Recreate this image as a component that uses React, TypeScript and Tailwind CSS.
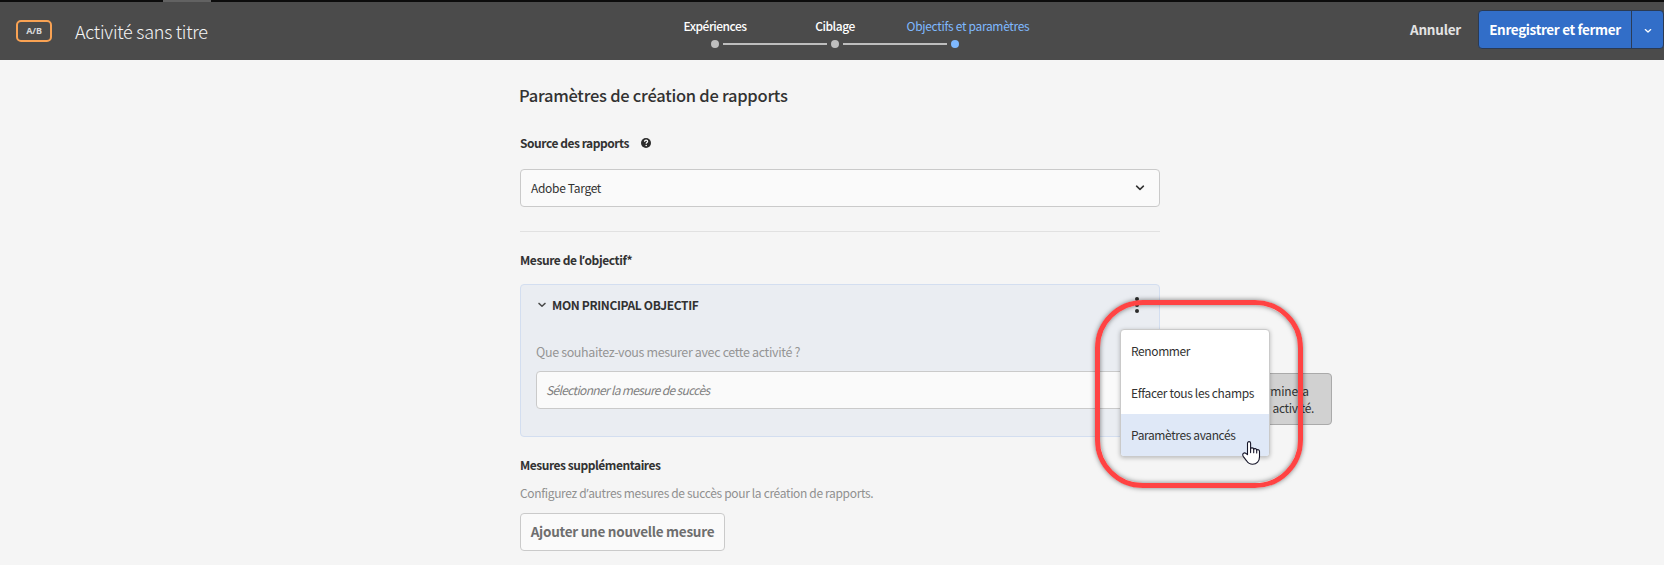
import type { ReactNode } from "react";

function Chevron({ className = "" }: { className?: string }) {
  return (
    <svg viewBox="0 0 10 6" className={`h-[6px] w-[10px] ${className}`} fill="none" stroke="currentColor" strokeWidth="1.6" strokeLinecap="round" strokeLinejoin="round">
      <path d="M1.6 1.2 5 4.3 8.4 1.2" />
    </svg>
  );
}

function Apostrophe() {
  return <span className="font-['Noto_Sans',sans-serif]">’</span>;
}

function Step({ label, active = false, className }: { label: string; active?: boolean; className: string }) {
  return (
    <div className="relative flex w-[120px] flex-col items-center">
      <span className={`text-[12px] leading-[18px] whitespace-nowrap ${className}`}>{label}</span>
      <span className={`mt-[5px] size-2 rounded-full ${active ? "bg-[#7fb9ff]" : "bg-[#bebebe]"}`} />
      {!active && <span className="absolute top-[26px] left-[68px] h-[2px] w-[104px] bg-[#bebebe]" />}
    </div>
  );
}

function Header() {
  return (
    <header className="flex h-[60px] flex-col bg-[#4b4b4b]">
      <div className="flex h-[2px] bg-[#0c0c0c] pl-[163px]">
        <div className="w-[48px] bg-[#626262]" />
      </div>
      <div className="flex h-[58px] items-start">
        <div className="mt-[18px] ml-4 flex h-[22px] w-9 items-center justify-center rounded-[5px] border-2 border-[#f9a253] font-['Noto_Sans',sans-serif] text-[9px] font-bold tracking-[-0.1px] text-[#d8d8d8]">
          A/B
        </div>
        <h1 className="mt-[17px] ml-[23px] w-[539px] text-[18px] leading-6 font-light tracking-[-0.25px] text-[#f5f5f5]">Activité sans titre</h1>
        <nav className="mt-[15px] ml-[41px] flex text-white">
          <Step label="Expériences" className="font-medium tracking-[-0.5px]" />
          <Step label="Ciblage" className="font-medium tracking-[-0.47px]" />
          <Step label="Objectifs et paramètres" active className="ml-[26px] tracking-[-0.31px] text-[#7fb9ff]" />
        </nav>
        <div className="mt-2 ml-auto flex items-center">
          <button className="mr-[17px] text-[13.5px] font-bold tracking-[-0.22px] text-[#e3e3e3]">Annuler</button>
          <div className="flex h-[39px] rounded-[4px] border border-[#2b3a52] bg-[#326ec8] text-white">
            <button className="w-[153px] border-r border-[#2a3c58] text-[13.5px] font-bold tracking-[-0.34px] whitespace-nowrap">Enregistrer et fermer</button>
            <button className="flex w-[31px] items-center justify-center">
              <Chevron className="mt-[2px] scale-[0.8]" />
            </button>
          </div>
        </div>
      </div>
    </header>
  );
}

function Label({ children, className }: { children: ReactNode; className: string }) {
  return <div className={`text-[12px] leading-5 font-bold whitespace-nowrap text-[#323232] ${className}`}>{children}</div>;
}

function OptionsMenu() {
  return (
    <div className="absolute top-[329px] left-[1120px] flex h-[128px] w-[150px] flex-col overflow-hidden rounded-[4px] border border-[#cacaca] bg-white text-[12px] whitespace-nowrap text-[#323232] shadow-[0_1px_4px_rgba(0,0,0,0.25)]">
      <div className="flex h-[42px] items-center pl-[10px] tracking-[-0.4px]">Renommer</div>
      <div className="flex h-[42px] items-center pl-[10px] tracking-[-0.35px]">Effacer tous les champs</div>
      <div className="flex h-[42px] items-center bg-[#dfe8f7] pl-[10px] tracking-[-0.38px]">Paramètres avancés</div>
    </div>
  );
}

function HandCursor() {
  return (
    <svg viewBox="0 0 19 24" className="absolute top-[441px] left-[1242px] h-6 w-[19px]" fill="#fff" stroke="#16162a" strokeWidth="1.1" strokeLinejoin="round" strokeLinecap="round">
      <path d="M5.5 13.6V2.3C5.5 1.2 6.2.6 7 .6s1.6.6 1.6 1.7v5.3c.4-1.1 3-1 3.1.5.6-.9 2.9-.6 3 .9.8-.7 2.8-.3 2.8 1.5v5.2c0 4.3-2.7 7.6-6.9 7.6-3 0-4.6-1.3-6-3.5L1.2 15.3c-1.4-2.3 1-4.2 2.5-3.1z" />
      <path d="M8.6 7.6v4M11.7 8.1v3.7M14.7 9v3" fill="none" />
    </svg>
  );
}

export default function App() {
  return (
    <div className="relative h-[565px] w-[1664px] overflow-hidden bg-[#f5f5f5] font-['Noto_Sans_CJK_SC',sans-serif]">
      <Header />
      <main className="ml-[520px] flex w-[640px] flex-col">
        <h2 className="mt-[23px] -ml-px text-[16.5px] leading-6 font-medium tracking-[-0.26px] text-[#323232]">Paramètres de création de rapports</h2>
        <div className="mt-[26px] flex items-center gap-[12px]">
          <Label className="tracking-[-0.46px]">Source des rapports</Label>
          <svg viewBox="0 0 10 10" className="size-[10px] text-[#2c2c2c]">
            <circle cx="5" cy="5" r="5" fill="currentColor" />
            <path d="M3.5 3.7C3.6 2.7 4.3 2.2 5.1 2.2c.9 0 1.5.5 1.5 1.3 0 1.1-1.4 1.1-1.4 2.2" fill="none" stroke="#fff" strokeWidth="1.3" />
            <circle cx="5.2" cy="7.5" r=".8" fill="#fff" />
          </svg>
        </div>
        <div className="mt-4 flex h-[38px] items-center justify-between rounded-[4px] border border-[#cacaca] bg-[#fafafa] pr-[14px] pl-[10px] text-[12px] tracking-[-0.32px] text-[#323232]">
          Adobe Target
          <Chevron />
        </div>
        <hr className="mt-6 border-[#e1e1e1]" />
        <Label className="mt-[18px] tracking-[-0.41px]">
          Mesure de l<Apostrophe />objectif*
        </Label>
        <section className="mt-[13px] h-[153px] rounded-[4px] border border-[#d3def0] bg-[#eaedf2] pl-[15px]">
          <div className="mt-[10px] flex items-center justify-between pr-5">
            <div className="flex items-center">
              <Chevron className="mr-[5px] ml-px scale-90 text-[#4b4b4b]" />
              <Label className="tracking-[-0.36px]">MON PRINCIPAL OBJECTIF</Label>
            </div>
            <svg viewBox="0 0 4 16" className="h-4 w-1" fill="#2c2c2c">
              <circle cx="2" cy="2" r="2" />
              <circle cx="2" cy="8" r="2" />
              <circle cx="2" cy="14" r="2" />
            </svg>
          </div>
          <div className="mt-[27px] text-[12.5px] leading-5 tracking-[-0.36px] text-[#959595]">Que souhaitez-vous mesurer avec cette activité ?</div>
          <div className="mt-[9px] mr-[15px] flex h-[38px] items-center rounded-[4px] border border-[#cacaca] bg-[#fafafa] pl-[9px] text-[12px] tracking-[-0.66px] text-[#808080] italic">
            Sélectionner la mesure de succès
          </div>
        </section>
        <Label className="mt-[18px] tracking-[-0.46px]">Mesures supplémentaires</Label>
        <p className="mt-2 text-[12px] leading-5 tracking-[-0.34px] whitespace-nowrap text-[#909090]">
          Configurez d<Apostrophe />autres mesures de succès pour la création de rapports.
        </p>
        <button className="mt-[9px] h-[38px] w-[205px] rounded-[4px] border border-[#cacaca] bg-[#fafafa] pb-px text-[13.5px] font-bold tracking-[-0.26px] whitespace-nowrap text-[#6e6e6e]">
          Ajouter une nouvelle mesure
        </button>
      </main>
      <div className="absolute top-[373px] left-[1180px] h-[52px] w-[152px] rounded-[4px] border border-[#aaa] bg-[#d1d1d1] pt-[8px] text-[12px] leading-[17px] text-[#323232]">
        <div className="w-[128px] text-right tracking-[-0.1px]">terminera</div>
        <div className="w-[133px] text-right tracking-[-0.33px]">activité.</div>
      </div>
      <OptionsMenu />
      <div className="absolute top-[300px] left-[1095px] h-[188px] w-[208px] rounded-[48px] border-[5px] border-[#ff4343] shadow-[0_0_5px_rgba(0,0,0,0.5),inset_0_0_5px_rgba(0,0,0,0.5)]" />
      <HandCursor />
    </div>
  );
}
